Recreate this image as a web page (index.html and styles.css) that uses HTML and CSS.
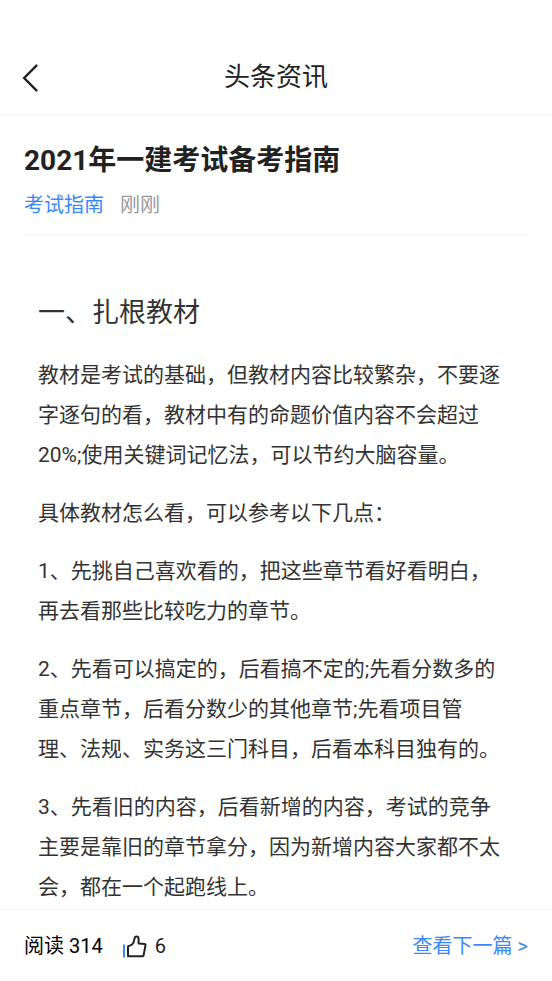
FILE: index.html
```html
<!DOCTYPE html>
<html lang="zh-CN">
<head>
    <meta charset="UTF-8">
    <meta name="viewport" content="width=device-width, initial-scale=1.0">
    <title>头条资讯</title>
    <link rel="stylesheet" href="styles.css">
</head>
<body>
    <header class="navbar">
        <button type="button" class="back-btn" aria-label="返回">
            <svg width="16" height="28" viewBox="0 0 16 28" fill="none" stroke="#222" stroke-width="2.4">
                <path d="M14.4 1.6 2.2 14l12.2 12.4" stroke-linecap="round"/>
            </svg>
        </button>
        <h1 class="navbar-title">头条资讯</h1>
    </header>

    <main>
        <div class="article-head">
            <h2 class="article-title">2021年一建考试备考指南</h2>
            <div class="article-meta">
                <a href="#" class="category">考试指南</a>
                <span class="time">刚刚</span>
            </div>
        </div>

        <article class="article-body">
            <h3>一、扎根教材</h3>
            <p>教材是考试的基础，但教材内容比较繁杂，不要逐字逐句的看，教材中有的命题价值内容不会超过20%;使用关键词记忆法，可以节约大脑容量。</p>
            <p>具体教材怎么看，可以参考以下几点：</p>
            <p>1、先挑自己喜欢看的，把这些章节看好看明白，再去看那些比较吃力的章节。</p>
            <p>2、先看可以搞定的，后看搞不定的;先看分数多的重点章节，后看分数少的其他章节;先看项目管理、法规、实务这三门科目，后看本科目独有的。</p>
            <p>3、先看旧的内容，后看新增的内容，考试的竞争主要是靠旧的章节拿分，因为新增内容大家都不太会，都在一个起跑线上。</p>
        </article>
    </main>

    <footer class="toolbar">
        <span class="reads">阅读 314</span>
        <button type="button" class="like-btn" aria-label="点赞 6">
            <svg width="24" height="24" viewBox="0 0 24 24" fill="none" stroke-width="2">
                <path d="M1 9.5v13" stroke="#3a88fa"/>
                <path d="M5 21.2V11.4L9 9.6C10.6 8.2 11.2 6.4 11.6 3.4 11.9.9 15.4.9 15.6 3.6V8.4l6.2.6c.5.1.8.4.7 1l-1.9 10.4c-.1.5-.4.8-.9.8z" stroke="#222" stroke-linejoin="round"/>
            </svg>
            <span>6</span>
        </button>
        <a href="#" class="next-link">查看下一篇 &gt;</a>
    </footer>
</body>
</html>
```

FILE: styles.css
```css
* {
    box-sizing: border-box;
}

body {
    font-family: Roboto, "Noto Sans CJK SC", sans-serif;
    background: #fff;
    color: #222;
    margin: 0;
    min-height: 100vh;
    display: flex;
    flex-direction: column;
}

h1, h2, h3, p {
    margin: 0;
}

a {
    text-decoration: none;
}

button {
    background: none;
    border: none;
    padding: 0;
    font: inherit;
    color: inherit;
    cursor: pointer;
}

svg {
    display: block;
}

/* top bar, with room for the phone's status bar */
.navbar {
    display: grid;
    grid-template-columns: 1fr auto 1fr;
    align-items: center;
    padding: 40px 22px 0;
    border-bottom: 1px solid #f3f3f3;
}

.back-btn {
    justify-self: start;
}

.navbar-title {
    font-size: 26px;
    font-weight: 400;
    line-height: 75px;
}

main {
    flex: 1;
}

.article-head {
    margin: 0 24px;
    padding: 25px 0 15px;
    border-bottom: 1px solid #f3f3f3;
}

.article-title {
    font-size: 28px;
    font-weight: 700;
    line-height: 40px;
}

.article-meta {
    display: flex;
    gap: 16px;
    font-size: 20px;
    line-height: 30px;
    margin-top: 9px;
}

.category {
    color: #3a88fa;
}

.time {
    color: #999;
}

.article-body {
    padding: 57px 50px 2px 38px;
    color: #333;
}

.article-body h3 {
    font-size: 27px;
    font-weight: 400;
    line-height: 40px;
    margin-bottom: 22px;
}

.article-body p {
    font-size: 21px;
    line-height: 40px;
}

.article-body p + p {
    margin-top: 18px;
}

.toolbar {
    display: flex;
    align-items: center;
    font-size: 20px;
    line-height: 73px;
    padding: 0 24px;
    border-top: 1px solid #f5f5f5;
}

.reads {
    color: #000;
}

.like-btn {
    display: flex;
    align-items: center;
    gap: 8px;
    margin-left: 20px;
}

.next-link {
    margin-left: auto;
    color: #3a88fa;
}
```
